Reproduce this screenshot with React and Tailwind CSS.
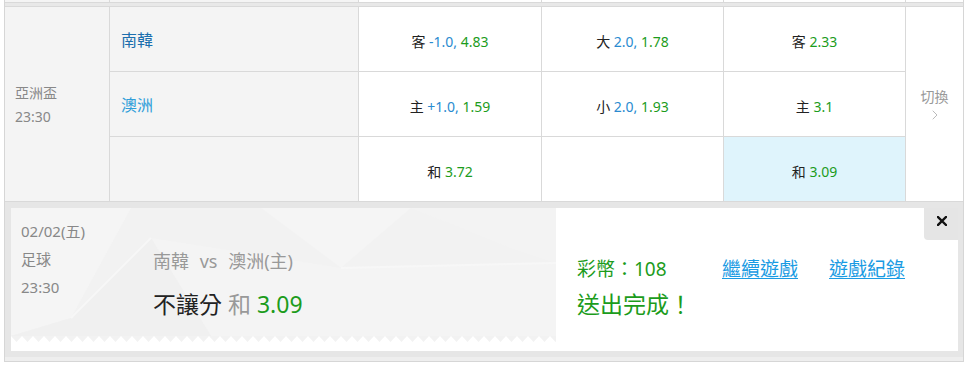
import { ChevronRight } from "lucide-react";

const font = "font-['Noto_Sans','Noto_Sans_CJK_TC',sans-serif]";

const rows = [
  {
    team: "南韓",
    teamColor: "text-[#1b6fae]",
    hdp: { side: "客", line: "-1.0,", odds: "4.83" },
    ou: { side: "大", line: "2.0,", odds: "1.78" },
    win: { side: "客", odds: "2.33" },
  },
  {
    team: "澳洲",
    teamColor: "text-[#2f9ed9]",
    hdp: { side: "主", line: "+1.0,", odds: "1.59" },
    ou: { side: "小", line: "2.0,", odds: "1.93" },
    win: { side: "主", odds: "3.1" },
  },
  {
    team: "",
    hdp: { side: "和", odds: "3.72" },
    ou: null,
    win: { side: "和", odds: "3.09", active: true },
  },
];

function OddCell({ bet }) {
  return (
    <div
      className={`h-[65px] border-b border-[#d9d9d9] flex items-center justify-center pt-[5px] text-[14px] ${
        bet && bet.active ? "bg-[#dff4fc]" : "bg-white"
      }`}
    >
      {bet && (
        <span>
          <span className="text-[#222]">{bet.side}</span>{" "}
          {bet.line && <span className="text-[#2a8bd0]">{bet.line} </span>}
          <span className="text-[#1c9c1c]">{bet.odds}</span>
        </span>
      )}
    </div>
  );
}

function Ticket() {
  const teeth = [];
  for (let i = 0; i < 50; i++) {
    const x = i * 11;
    teeth.push(`${x},0 ${x + 11},0 ${x + 5.5},6`);
  }
  return (
    <div className="w-[545px] flex flex-col">
      <div className="relative h-[128px] bg-[#f2f2f2] overflow-hidden">
        <svg className="absolute inset-0" width="545" height="128">
          <polygon points="0,0 120,0 60,110 0,128" fill="#f5f5f5" />
          <polygon points="250,0 400,0 330,60" fill="#f5f5f5" />
          <polygon points="400,0 545,0 545,55 500,40" fill="#f3f3f3" />
          <polygon points="140,30 330,60 545,55 545,128 200,128" fill="#f4f4f4" />
          <polygon points="0,128 60,110 140,30 200,128" fill="#f0f0f0" />
          <line x1="140" y1="30" x2="60" y2="110" stroke="#f7f7f7" strokeWidth="2" />
          <line x1="330" y1="60" x2="545" y2="55" stroke="#f7f7f7" strokeWidth="2" />
        </svg>
        <div className="relative flex">
          <div className="w-[142px] pl-[10px] pt-[9px] text-[15px] leading-[28px] text-[#888]">
            <div>02/02(五)</div>
            <div>足球</div>
            <div>23:30</div>
          </div>
          <div className="pt-[40px]">
            <div className="text-[18px] leading-[26px] text-[#999]">
              南韓 <span className="mx-[6px]">vs</span> 澳洲(主)
            </div>
            <div className="mt-[14px] text-[23px] leading-[32px]">
              <span className="text-[#222]">不讓分</span>{" "}
              <span className="text-[#999]">和</span>{" "}
              <span className="text-[#1c9c1c]">3.09</span>
            </div>
          </div>
        </div>
      </div>
      <svg width="545" height="6" className="block">
        {teeth.map((p, i) => (
          <polygon key={i} points={p} fill="#f2f2f2" />
        ))}
      </svg>
    </div>
  );
}

export default function App() {
  return (
    <div className={`${font} pl-[4px] bg-white`}>
      <div className="w-[960px] border-x border-b border-[#d6d6d6]">
        {/* tail of the previous row */}
        <div className="flex h-[2px]">
          <div className="w-[105px] border-r border-[#d9d9d9] bg-[#f4f4f4]" />
          <div className="w-[249px] border-r border-[#d9d9d9] bg-[#f4f4f4]" />
          <div className="w-[183px] border-r border-[#d9d9d9]" />
          <div className="w-[182px] border-r border-[#d9d9d9]" />
          <div className="w-[182px] border-r border-[#d9d9d9]" />
          <div className="flex-1" />
        </div>
        <div className="h-[5px] bg-[#e8e8e8] border-y border-[#d9d9d9]" />

        {/* match row */}
        <div className="flex">
          <div className="w-[105px] border-r border-b border-[#d9d9d9] bg-[#f4f4f4] flex flex-col justify-center pl-[10px] pt-[2px] text-[14px] leading-[24px] text-[#888]">
            <div>亞洲盃</div>
            <div>23:30</div>
          </div>
          <div className="w-[249px] border-r border-[#d9d9d9] bg-[#f4f4f4]">
            {rows.map((r, i) => (
              <div
                key={i}
                className={`h-[65px] border-b border-[#d9d9d9] flex items-center pl-[11px] pt-[2px] text-[16px] ${r.teamColor || ""}`}
              >
                {r.team}
              </div>
            ))}
          </div>
          <div className="w-[183px] border-r border-[#d9d9d9]">
            {rows.map((r, i) => (
              <OddCell key={i} bet={r.hdp} />
            ))}
          </div>
          <div className="w-[182px] border-r border-[#d9d9d9]">
            {rows.map((r, i) => (
              <OddCell key={i} bet={r.ou} />
            ))}
          </div>
          <div className="w-[182px] border-r border-[#d9d9d9]">
            {rows.map((r, i) => (
              <OddCell key={i} bet={r.win} />
            ))}
          </div>
          <div className="flex-1 border-b border-[#d9d9d9] flex flex-col items-center justify-center pt-[2px] text-[14px] text-[#999]">
            <div className="leading-[20px]">切換</div>
            <ChevronRight size={16} strokeWidth={1.2} className="text-[#aaa]" />
          </div>
        </div>

        {/* result panel */}
        <div className="bg-[#e6e6e6] pl-[6px] pr-[5px] pt-[6px] pb-[6px]">
          <div className="relative flex h-[143px] bg-white">
            <Ticket />
            <div className="flex-1 pl-[21px] pt-[47px]">
              <div className="flex items-center text-[19px] leading-[28px]">
                <span className="w-[145px] text-[#1c9c1c]">彩幣：108</span>
                <a href="#" className="text-[#1a9be3] underline underline-offset-2">
                  繼續遊戲
                </a>
                <a href="#" className="ml-[31px] text-[#1a9be3] underline underline-offset-2">
                  遊戲紀錄
                </a>
              </div>
              <div className="mt-[6px] text-[23px] leading-[30px] text-[#1c9c1c]">送出完成！</div>
            </div>
            <button className="absolute top-0 right-0 w-[34px] h-[32px] bg-[#e5e5e5] rounded-bl-[4px] flex items-start justify-center pt-[8px] pl-[2px]">
              <svg width="10" height="10" viewBox="0 0 10 10">
                <path d="M1 1L9 9M9 1L1 9" stroke="#111" strokeWidth="2.4" strokeLinecap="square" />
              </svg>
            </button>
          </div>
        </div>
        <div className="h-[4px] bg-[#eeeeee]" />
      </div>
    </div>
  );
}
